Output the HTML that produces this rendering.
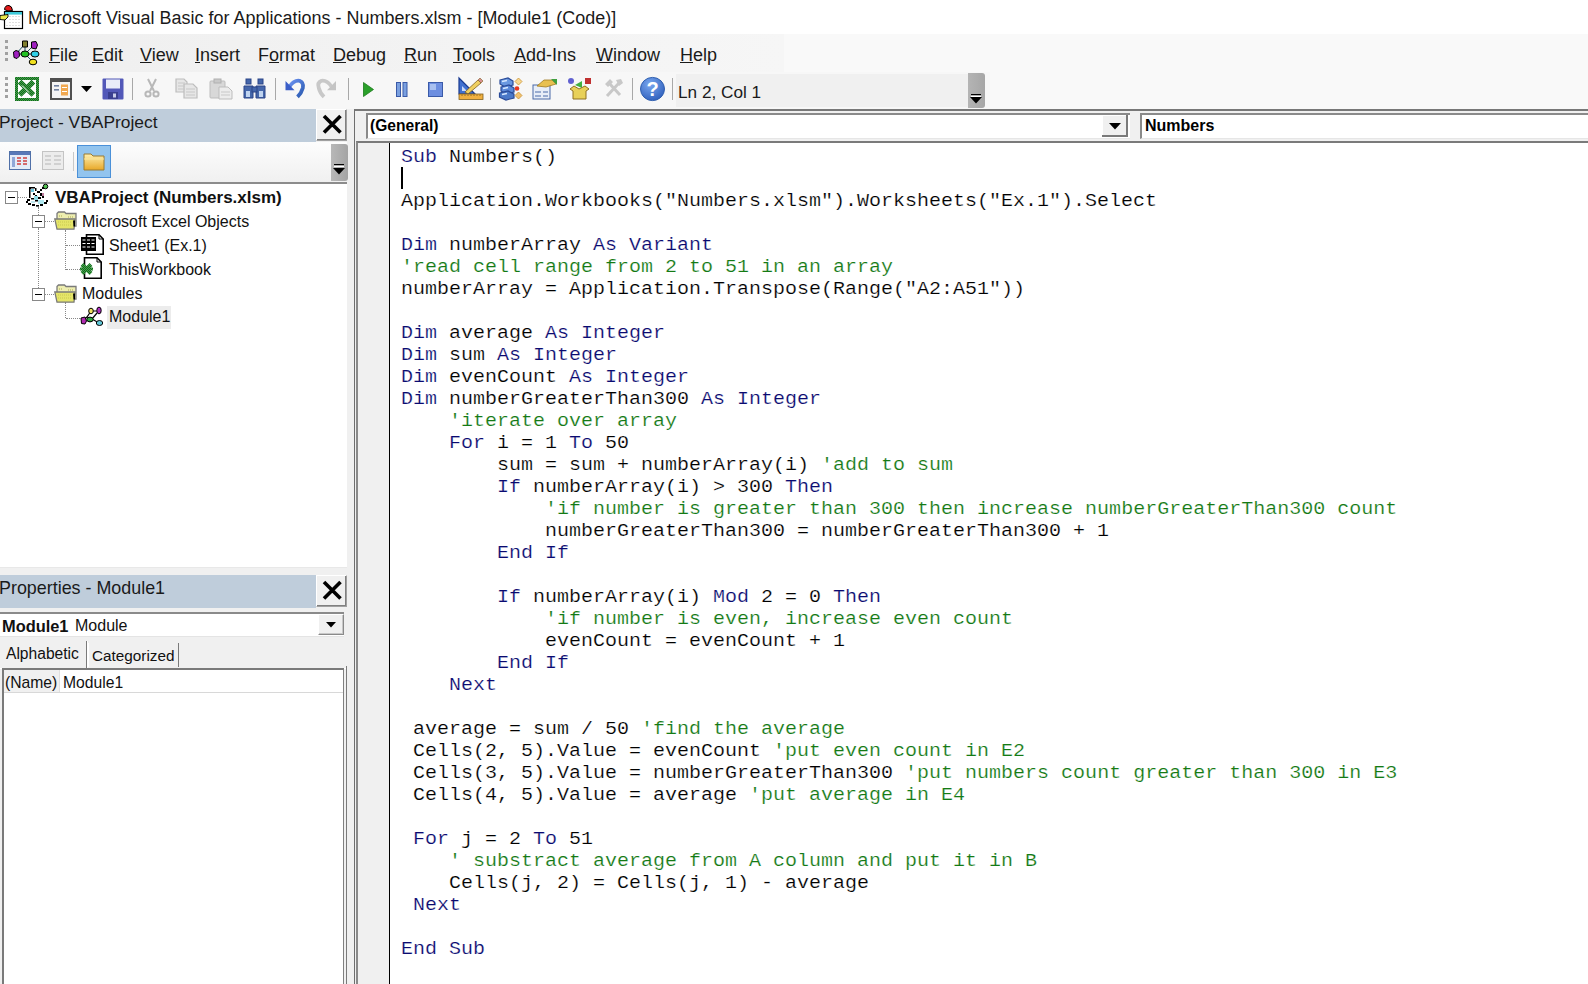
<!DOCTYPE html>
<html><head><meta charset="utf-8">
<style>
*{margin:0;padding:0;box-sizing:border-box}
html,body{width:1588px;height:984px;overflow:hidden;background:#f0f0f0;font-family:"Liberation Sans",sans-serif;color:#000;position:relative}
.a{position:absolute}
svg{position:absolute;overflow:visible}
#title{left:0;top:0;width:1588px;height:34px;background:#fff}
#title .t{left:28px;top:8px;font-size:17.95px;letter-spacing:0.02px;white-space:nowrap;color:#1a1a1a}
#dock{left:0;top:34px;width:1588px;height:75px;background:#f9f9f9}
#menu{left:0;top:34px;width:784px;height:38px;background:linear-gradient(90deg,#efefef,#f3f3f3 60%,#f6f6f6)}
#menu span{position:absolute;top:11px;font-size:18px;color:#1a1a1a;white-space:nowrap}
#menu u{text-underline-offset:1px}
#tb{left:0;top:72px;width:990px;height:37px;background:#f7f7f7}
.sep{position:absolute;width:1px;background:#a8a8a8;top:6px;height:22px}
.grip{position:absolute;width:3px;height:3px;background:#a0a0a0}
#ln{left:676px;top:2px;width:292px;height:33px;background:#f0f0f0}
#ln span{position:absolute;left:2px;top:8px;font-size:17.2px;color:#1a1a1a;white-space:nowrap}
.ptitle{left:0;width:316px;height:33px;background:#bfcddb;overflow:hidden}
.ptitle span{position:absolute;left:-1px;top:5px;line-height:1;font-size:17.4px;color:#1a1a1a;white-space:nowrap}
.xbtn{width:31px;height:32px;background:#f0f0f0;border:1px solid #a0a0a0;border-left-color:#fff;border-top-color:#fff;box-shadow:inset -1px -1px 0 #808080}
#ptb{left:0;top:142px;width:347px;height:40px;background:linear-gradient(#fdfdfd,#f0f0f0)}
#tree{left:0;top:182px;width:347px;height:386px;background:#fff;border-top:2px solid #8c8c8c}
.tr{position:absolute;font-size:16px;white-space:nowrap;color:#111}
.mb{position:absolute;width:13px;height:13px;border:1px solid #888;background:#fff}
.mb:after{content:"";position:absolute;left:2px;top:5px;width:7px;height:1px;background:#000}
.dv{position:absolute;width:1px;border-left:1px dotted #888}
.dh{position:absolute;height:1px;border-top:1px dotted #888}
#code{left:354px;top:109px;width:1234px;height:875px;background:#f0f0f0;border-left:1px solid #6e6e6e;border-top:2px solid #787878}
.combo{position:absolute;background:#fff;border-top:2px solid #8a8a8a;border-left:2px solid #8a8a8a;border-bottom:1px solid #e6e6e6}
.combo span{position:absolute;left:3px;top:0px;font-size:15.9px;font-weight:bold;white-space:nowrap}
#ed{left:1px;top:30px;width:1232px;height:845px;background:#fff;border-top:2px solid #7a7a7a;border-left:2px solid #8a8a8a}
#gut{left:0;top:0;width:32px;height:843px;background:#f0f0f0;border-right:1px solid #000}
pre{position:absolute;left:43px;top:3px;font-family:"Liberation Mono",monospace;font-size:20px;line-height:25px;color:#000;transform:scaleY(0.88);transform-origin:0 0;-webkit-text-stroke:0.2px #fff}
pre b{font-weight:normal;color:#0a0a70}
pre i{font-style:normal;color:#147a14}
</style></head><body>
<div id="title" class="a"><div class="t a">Microsoft Visual Basic for Applications - Numbers.xlsm - [Module1 (Code)]</div></div>
<div id="dock" class="a"></div>
<div id="menu" class="a">
<span style="left:49px"><u>F</u>ile</span>
<span style="left:92px"><u>E</u>dit</span>
<span style="left:140px"><u>V</u>iew</span>
<span style="left:195px"><u>I</u>nsert</span>
<span style="left:258px">F<u>o</u>rmat</span>
<span style="left:333px"><u>D</u>ebug</span>
<span style="left:404px"><u>R</u>un</span>
<span style="left:453px"><u>T</u>ools</span>
<span style="left:514px"><u>A</u>dd-Ins</span>
<span style="left:596px"><u>W</u>indow</span>
<span style="left:680px"><u>H</u>elp</span>
</div>
<div id="tb" class="a">
<div class="sep" style="left:132px"></div>
<div class="sep" style="left:275px"></div>
<div class="sep" style="left:348px"></div>
<div class="sep" style="left:490px"></div>
<div class="sep" style="left:632px"></div>
<div class="sep" style="left:672px"></div>
<div id="ln" class="a"><span>Ln 2, Col 1</span></div>
</div>
<!-- title icon -->
<svg style="left:0;top:0" width="24" height="32" viewBox="0 0 24 32">
<rect x="4.5" y="11.5" width="18" height="17" fill="#fff" stroke="#000" stroke-width="1.2"/>
<rect x="5" y="12" width="17" height="2.6" fill="#3cc8d8"/>
<g fill="#aaa"><circle cx="10" cy="16.5" r=".5"/><circle cx="13" cy="16.5" r=".5"/><circle cx="16" cy="16.5" r=".5"/><circle cx="19" cy="16.5" r=".5"/><circle cx="10" cy="19.5" r=".5"/><circle cx="13" cy="19.5" r=".5"/><circle cx="16" cy="19.5" r=".5"/><circle cx="19" cy="19.5" r=".5"/><circle cx="10" cy="22.5" r=".5"/><circle cx="13" cy="22.5" r=".5"/><circle cx="16" cy="22.5" r=".5"/><circle cx="19" cy="22.5" r=".5"/><circle cx="7" cy="25.5" r=".5"/><circle cx="10" cy="25.5" r=".5"/><circle cx="13" cy="25.5" r=".5"/><circle cx="16" cy="25.5" r=".5"/><circle cx="19" cy="25.5" r=".5"/></g>
<path d="M4.5 9.5 Q5 5 9 5.5 Q12 6 12.5 10.5 L8 11 Z" fill="#e31b1b" stroke="#000" stroke-width="1"/>
<path d="M0 15.5 L8 14.5 L8 17 L5 20 L0 19.5 Z" fill="#e8e84a" stroke="#000" stroke-width=".9"/>
</svg>
<!-- menu grip -->
<div class="grip" style="left:5px;top:40px"></div><div class="grip" style="left:5px;top:46px"></div><div class="grip" style="left:5px;top:52px"></div><div class="grip" style="left:5px;top:58px"></div>
<!-- menu vba icon -->
<svg style="left:12px;top:39px" width="28" height="28" viewBox="0 0 28 28">
<g stroke="#000" stroke-width="1"><path d="M4 15 L13 15 L22 15 M13 15 L13 5 M13 15 L22 6 M13 15 L21 23 M4 15 L12 6" fill="none" stroke="#205060"/>
<path d="M1.5 13 L4 11.5 L7 12.5 L7.5 17 L5 19.5 L2 18.5 Z" fill="#a020c0"/>
<ellipse cx="13" cy="15" rx="4" ry="3" fill="#22c022"/>
<ellipse cx="23" cy="15" rx="4" ry="3" fill="#30d0e8"/>
<path d="M10.5 2 L15.5 2 L15.5 8 L10.5 8 Z" fill="#808030"/>
<path d="M19.5 3 L24 2.5 L25.5 6 L24 10 L19.5 9 Z" fill="#a020c0"/>
<ellipse cx="21" cy="23" rx="3.8" ry="2.8" fill="#f0e020"/></g>
</svg>
<!-- toolbar grip -->
<div class="grip" style="left:5px;top:77px"></div><div class="grip" style="left:5px;top:83px"></div><div class="grip" style="left:5px;top:89px"></div><div class="grip" style="left:5px;top:95px"></div>
<!-- excel -->
<svg style="left:15px;top:77px" width="24" height="24" viewBox="0 0 24 24">
<defs><pattern id="chk" width="2" height="2" patternUnits="userSpaceOnUse"><rect width="2" height="2" fill="#0e6a1e"/><rect width="1" height="1" fill="#4aa04a"/><rect x="1" y="1" width="1" height="1" fill="#4aa04a"/></pattern></defs>
<rect x="0" y="0" width="24" height="24" fill="url(#chk)"/>
<rect x="3" y="3" width="18" height="18" fill="#fff"/>
<g stroke="url(#chk)" stroke-width="5.2" stroke-linecap="square"><path d="M6.5 6.5 L16.5 16"/><path d="M16.5 6.5 L6.5 16"/></g>
<rect x="4" y="8" width="15" height="7" fill="url(#chk)" opacity=".0"/>
<path d="M7 8.5 L14 15.5" stroke="#fff" stroke-width="1"/>
</svg>
<!-- userform -->
<svg style="left:50px;top:78px" width="22" height="22" viewBox="0 0 22 22">
<rect x="1" y="1" width="20" height="20" fill="#f4f4f4" stroke="#505050" stroke-width="2"/>
<rect x="1" y="1" width="20" height="3" fill="#505050"/>
<rect x="4" y="7" width="5" height="1.6" fill="#7080a0"/><rect x="4" y="11" width="5" height="1.6" fill="#7080a0"/>
<rect x="11" y="6.5" width="7" height="11" fill="#f0a850"/><rect x="12" y="9" width="5" height="1" fill="#fff"/><rect x="12" y="13" width="5" height="1" fill="#fff"/>
</svg>
<svg style="left:81px;top:86px" width="12" height="7" viewBox="0 0 12 7"><path d="M0 0 L11 0 L5.5 6 Z" fill="#000"/></svg>
<!-- save -->
<svg style="left:102px;top:78px" width="22" height="22" viewBox="0 0 22 22">
<rect x="0.5" y="0.5" width="21" height="21" rx="1" fill="#5258b8"/>
<rect x="4" y="1.5" width="14" height="9" fill="#e8ecf8"/>
<rect x="6" y="14" width="10" height="7" fill="#3a3f90"/><rect x="11" y="15.5" width="3" height="4" fill="#c8cce8"/>
</svg>
<!-- cut -->
<svg style="left:144px;top:78px" width="16" height="20" viewBox="0 0 16 20">
<g fill="none" stroke="#b8b8b8" stroke-width="2"><path d="M4 1 L10 13 M12 1 L6 13"/><circle cx="4" cy="16" r="2.6"/><circle cx="12" cy="16" r="2.6"/></g>
</svg>
<!-- copy -->
<svg style="left:175px;top:78px" width="23" height="21" viewBox="0 0 23 21">
<g fill="#e6e6e6" stroke="#bdbdbd" stroke-width="1.2"><path d="M1 1 L9 1 L12 4 L12 14 L1 14 Z"/><path d="M9 6 L18 6 L22 10 L22 20 L9 20 Z"/></g>
<g stroke="#c8c8c8" stroke-width="1"><path d="M3 5 H10 M3 8 H10 M3 11 H10 M11 11 H20 M11 14 H20 M11 17 H20"/></g>
</svg>
<!-- paste -->
<svg style="left:209px;top:78px" width="24" height="22" viewBox="0 0 24 22">
<rect x="1" y="3" width="15" height="17" rx="1" fill="#d8d8d8" stroke="#bdbdbd"/>
<rect x="5" y="1" width="7" height="4" fill="#c8c8c8" stroke="#b0b0b0"/>
<path d="M10 9 L19 9 L23 13 L23 21 L10 21 Z" fill="#ececec" stroke="#bdbdbd"/>
<path d="M12 14 H21 M12 17 H21" stroke="#c8c8c8"/>
</svg>
<!-- binoculars -->
<svg style="left:243px;top:78px" width="23" height="21" viewBox="0 0 23 21">
<g fill="#4466aa" stroke="#2a4488" stroke-width="1"><rect x="3" y="1" width="5" height="5"/><rect x="15" y="1" width="5" height="5"/>
<path d="M1 8 L10 8 L10 20 L1 20 Z"/><path d="M13 8 L22 8 L22 20 L13 20 Z"/><rect x="9" y="9" width="5" height="5"/></g>
<rect x="3" y="13" width="4" height="6" fill="#c0d4f0"/><rect x="16" y="13" width="4" height="6" fill="#c0d4f0"/>
</svg>
<!-- undo -->
<svg style="left:285px;top:79px" width="20" height="19" viewBox="0 0 20 19">
<defs><linearGradient id="ug" x1="0" y1="0" x2="1" y2="1"><stop offset="0" stop-color="#6a90f0"/><stop offset="1" stop-color="#2a5ab0"/></linearGradient></defs>
<path d="M4.5 7.5 Q9 1 14.5 1.8 Q19 3.5 17.8 9 Q16.5 14 12.5 17.8" fill="none" stroke="url(#ug)" stroke-width="3.8"/>
<path d="M0.5 2 L0.5 11.2 L9.5 11.2 Z" fill="#3a5ec8"/>
</svg>
<!-- redo -->
<svg style="left:318px;top:79px" width="20" height="19" viewBox="0 0 20 19">
<path d="M13.5 7.5 Q9 1 3.5 1.8 Q-1 3.5 0.8 9 Q2 14 6 17.8" fill="none" stroke="#c8c8c8" stroke-width="3.8"/>
<path d="M18 2 L18 11.2 L9 11.2 Z" fill="#c4c4c4"/>
</svg>
<!-- run -->
<svg style="left:363px;top:82px" width="11" height="15" viewBox="0 0 11 15"><path d="M0.5 0.5 L10.5 7.5 L0.5 14.5 Z" fill="#2aa02a" stroke="#1a7a1a" stroke-width=".8"/></svg>
<!-- pause -->
<svg style="left:396px;top:82px" width="12" height="15" viewBox="0 0 12 15"><rect x="0.5" y="0.5" width="4" height="14" fill="#7aa0e0" stroke="#3a5aa8"/><rect x="7" y="0.5" width="4" height="14" fill="#7aa0e0" stroke="#3a5aa8"/></svg>
<!-- stop -->
<svg style="left:428px;top:82px" width="15" height="15" viewBox="0 0 15 15"><rect x="0.5" y="0.5" width="14" height="14" fill="#6c8ee0" stroke="#3a5aa8"/><rect x="2" y="2" width="6" height="6" fill="#a8c0f0"/></svg>
<!-- design -->
<svg style="left:458px;top:77px" width="26" height="23" viewBox="0 0 26 23">
<path d="M1 1 L1 17 L17 17 Z" fill="#4070d0" stroke="#1a3a90" stroke-width="1.2"/><path d="M4 9 L4 14 L9 14 Z" fill="#c8d8f8"/>
<path d="M7 15 L20 3 L23 6 L10 17 Z" fill="#f0d060" stroke="#806020" stroke-width=".8"/>
<path d="M20 3 L22 1 L25 4 L23 6 Z" fill="#d89090" stroke="#806020" stroke-width=".6"/>
<rect x="1" y="17" width="24" height="5.5" fill="#f0b040" stroke="#806020" stroke-width=".8"/>
<path d="M4 17.5 V19 M7 17.5 V19 M10 17.5 V19 M13 17.5 V19 M16 17.5 V19 M19 17.5 V19 M22 17.5 V19" stroke="#806020" stroke-width=".8"/>
</svg>
<!-- project explorer -->
<svg style="left:499px;top:77px" width="25" height="24" viewBox="0 0 25 24">
<g stroke="#2a4a98" stroke-width="1.2">
<path d="M1 3 L9 1 L14 4 L14 8 L6 10 L1 7 Z" fill="#6a98e0"/>
<path d="M2 10 L10 8 L15 11 L15 15 L7 17 L2 14 Z" fill="#5a88d8"/>
<path d="M0.5 16 L9 14 L15 17 L15 21 L7 23 L0.5 20 Z" fill="#4a78c8"/>
</g>
<path d="M3 4.5 L8 3.5 M4 11.5 L9 10.5 M3 17.5 L8 16.5" stroke="#d8e8ff" stroke-width="1.3"/>
<path d="M19.5 1 L23 4.5 L19.5 8 L16 4.5 Z" fill="#f8d890" stroke="#c89030" stroke-width=".8"/>
<circle cx="18" cy="11.5" r="2.3" fill="#e83820"/>
<path d="M19.5 15 L23 18.5 L19.5 22 L16 18.5 Z" fill="#f0c070" stroke="#c89030" stroke-width=".8"/>
</svg>
<!-- properties -->
<svg style="left:532px;top:78px" width="26" height="22" viewBox="0 0 26 22">
<rect x="1" y="7" width="17" height="14" fill="#e8eef8" stroke="#4a6aa8"/>
<path d="M3 14 H9 M11 14 H16 M3 18 H9 M11 18 H16" stroke="#4a6aa8" stroke-width="1.2"/>
<path d="M5 8 L12 2 L20 2 L24 6 L14 9 Z" fill="#e8c050" stroke="#a07a20" stroke-width=".8"/>
<path d="M19 1 L25 1 L25 7 Z" fill="#40a040"/>
</svg>
<!-- object browser -->
<svg style="left:567px;top:77px" width="25" height="24" viewBox="0 0 25 24">
<circle cx="4" cy="4" r="3" fill="#6060d0"/><rect x="18" y="1" width="6" height="6" fill="#c03030"/><path d="M8 8 L15 4 L15 11 Z" fill="#40b040"/>
<path d="M3 12 L7 9 L12 12 L18 9 L22 12 L19 14 L19 22 L6 22 L6 14 Z" fill="#e8d058" stroke="#907020"/>
</svg>
<!-- toolbox -->
<svg style="left:604px;top:78px" width="20" height="21" viewBox="0 0 20 21">
<g stroke="#c8c8c8" stroke-width="3" fill="none"><path d="M3 18 L15 5"/><path d="M5 5 L16 17"/></g>
<path d="M1 6 L6 1 L9 4 L4 9 Z M12 2 L17 1 L19 5 L15 8 Z" fill="#c8c8c8"/>
</svg>
<!-- help -->
<svg style="left:640px;top:77px" width="25" height="24" viewBox="0 0 25 24">
<defs><radialGradient id="hg" cx=".4" cy=".3" r=".8"><stop offset="0" stop-color="#7aa8f0"/><stop offset="1" stop-color="#2a5ab8"/></radialGradient></defs>
<ellipse cx="12.5" cy="12" rx="12" ry="11.6" fill="url(#hg)" stroke="#3060b0"/>
<text x="12.5" y="19" font-family="Liberation Sans" font-weight="bold" font-size="20" fill="#fff" text-anchor="middle">?</text>
</svg>
<!-- ln grip -->
<div class="a" style="left:968px;top:73px;width:17px;height:35px;background:linear-gradient(90deg,#b4b4b4,#a6a6a6);border-radius:0 3px 3px 0"></div>
<div class="a" style="left:971px;top:94px;width:10px;height:1px;background:#000"></div>
<div class="a" style="left:971px;top:96px;width:10px;height:1px;background:#fff"></div>
<svg style="left:970px;top:97px" width="12" height="7" viewBox="0 0 12 7"><path d="M0 0 L12 0 L6 6.5 Z" fill="#000"/></svg>

<!-- project pane -->
<div class="a ptitle" style="top:109px"><span>Project - VBAProject</span></div>
<div class="a xbtn" style="left:316px;top:109px"></div>
<div id="ptb" class="a"></div>
<div id="tree" class="a">
<div class="tr" style="left:55px;top:4px;font-weight:bold;font-size:17px">VBAProject (Numbers.xlsm)</div>
<div class="tr" style="left:82px;top:29px">Microsoft Excel Objects</div>
<div class="tr" style="left:109px;top:53px">Sheet1 (Ex.1)</div>
<div class="tr" style="left:109px;top:77px">ThisWorkbook</div>
<div class="tr" style="left:82px;top:101px">Modules</div>
<div class="a" style="left:107px;top:122px;width:64px;height:23px;background:#ececec"></div>
<div class="tr" style="left:109px;top:124px">Module1</div>
</div>
<!-- properties pane -->
<div class="a ptitle" style="top:575px"><span style="font-size:17.9px;top:5px">Properties - Module1</span></div>
<div class="a xbtn" style="left:316px;top:575px"></div>
<!-- close X glyphs -->
<svg style="left:316px;top:109px" width="31" height="32" viewBox="0 0 31 32"><path d="M8 7 L24.5 23.5 M24.5 7 L8 23.5" stroke="#000" stroke-width="3.6"/></svg>
<svg style="left:316px;top:575px" width="31" height="32" viewBox="0 0 31 32"><path d="M8 7 L24.5 23.5 M24.5 7 L8 23.5" stroke="#000" stroke-width="3.6"/></svg>
<!-- project toolbar icons -->
<svg style="left:9px;top:151px" width="22" height="19" viewBox="0 0 22 19">
<rect x="0.5" y="0.5" width="21" height="18" fill="#e4ecf8" stroke="#5070a8"/>
<rect x="1" y="1" width="20" height="3" fill="#5878b8"/>
<rect x="3" y="6" width="3" height="10" fill="#90a8d8"/>
<path d="M8 7 H12 M14 7 H18 M8 10 H12 M14 10 H18 M8 13 H12 M14 13 H18" stroke="#d04040" stroke-width="1.4"/>
</svg>
<svg style="left:42px;top:151px" width="22" height="19" viewBox="0 0 22 19">
<rect x="0.5" y="0.5" width="21" height="18" fill="#ececec" stroke="#c4c4c4"/>
<path d="M3 5 H9 M12 5 H19 M3 9 H9 M12 9 H19 M3 13 H9 M12 13 H19" stroke="#c8c8c8" stroke-width="1.6"/>
</svg>
<div class="a" style="left:73px;top:152px;width:1px;height:19px;background:#c8c8c8"></div>
<div class="a" style="left:77px;top:145px;width:34px;height:33px;background:#92c4ee;border:1px solid #4a90d8"></div>
<svg style="left:83px;top:151px" width="22" height="20" viewBox="0 0 22 20">
<defs><linearGradient id="fg" x1="0" y1="0" x2="0" y2="1"><stop offset="0" stop-color="#fff0b0"/><stop offset="1" stop-color="#e8a828"/></linearGradient></defs>
<path d="M1 3 L8 3 L10 5 L21 5 L21 19 L1 19 Z" fill="url(#fg)" stroke="#9a7a30"/>
<path d="M1 8 H21" stroke="#f8e8a0"/>
</svg>
<div class="a" style="left:331px;top:144px;width:17px;height:37px;background:linear-gradient(90deg,#b8b8b8,#a4a4a4);border-radius:0 3px 3px 0"></div>
<div class="a" style="left:334px;top:164px;width:10px;height:1px;background:#000"></div>
<div class="a" style="left:334px;top:166px;width:10px;height:1px;background:#fff"></div>
<svg style="left:333px;top:168px" width="12" height="7" viewBox="0 0 12 7"><path d="M0 0 L12 0 L6 6.5 Z" fill="#000"/></svg>
<!-- tree lines -->
<div class="mb" style="left:5px;top:191px"></div>
<div class="mb" style="left:32px;top:215px"></div>
<div class="mb" style="left:32px;top:288px"></div>
<div class="dh" style="left:18px;top:197px;width:9px"></div>
<div class="dv" style="left:38px;top:207px;height:8px"></div>
<div class="dv" style="left:38px;top:228px;height:60px"></div>
<div class="dh" style="left:45px;top:221px;width:9px"></div>
<div class="dh" style="left:45px;top:294px;width:9px"></div>
<div class="dv" style="left:65px;top:230px;height:40px"></div>
<div class="dh" style="left:66px;top:245px;width:14px"></div>
<div class="dh" style="left:66px;top:269px;width:14px"></div>
<div class="dv" style="left:65px;top:302px;height:16px"></div>
<div class="dh" style="left:66px;top:318px;width:14px"></div>
<!-- project icon -->
<svg style="left:26px;top:184px" width="24" height="24" viewBox="0 0 24 24">
<g fill="#000">
<rect x="3" y="3" width="2" height="2"/><rect x="5" y="3" width="4" height="1.5"/><rect x="3" y="5" width="1.5" height="9"/>
<rect x="9" y="4" width="1.5" height="3"/><rect x="11" y="7" width="3" height="2"/><rect x="14" y="5" width="2" height="2"/>
<rect x="16" y="3" width="2" height="2"/><rect x="7" y="9" width="2" height="2"/><rect x="9" y="11" width="2" height="2"/>
<rect x="14" y="9" width="2" height="3"/><rect x="16" y="12" width="2" height="2"/><rect x="12" y="13" width="3" height="2"/>
<rect x="1" y="15" width="3" height="2"/><rect x="0" y="17" width="2" height="2"/><rect x="2" y="19" width="3" height="2"/>
<rect x="6" y="20" width="3" height="2"/><rect x="10" y="21" width="3" height="1.6"/><rect x="14" y="20" width="3" height="2"/>
<rect x="18" y="18" width="3" height="2"/><rect x="20" y="16" width="2" height="2"/><rect x="5" y="14" width="3" height="1.5"/>
<rect x="9" y="16" width="3" height="1.5"/><rect x="15" y="16" width="3" height="1.5"/>
</g>
<rect x="5" y="5" width="3" height="3" fill="#70c8e0"/><rect x="8" y="12" width="4" height="4" fill="#90dce8"/><rect x="12" y="16" width="6" height="4" fill="#b0e8f0"/>
<rect x="5" y="17" width="4" height="2" fill="#c0e8f0"/>
<rect x="16" y="9" width="2" height="3" fill="#c080a0"/>
<circle cx="19.5" cy="2.5" r="2.3" fill="#50c050" stroke="#000" stroke-width="1"/>
</svg>
<!-- folders -->
<svg style="left:54px;top:211px" width="24" height="19" viewBox="0 0 24 19">
<path d="M3 2.5 L4.5 1 L10.5 1 L12 2.5 L22 2.5 L22 15 L3 15 Z" fill="#eeeeb0" stroke="#7a7a7a" stroke-width="1.3"/>
<path d="M5 5 L9 5 M14 6 L19 6" stroke="#a8a850" stroke-width="1" stroke-dasharray="1 1"/>
<path d="M0.8 8 L21 8 L20 18.2 L3 18.2 Z" fill="#e4e468" stroke="#7a7a7a" stroke-width="1.3"/>
<path d="M4 11 H18 M4 14 H18" stroke="#c8c850" stroke-width="1" stroke-dasharray="1 1"/>
<path d="M19 9.5 L21 9.5 L21 15.5 L19.5 15.5 Z" fill="#000"/>
</svg>
<svg style="left:54px;top:284px" width="24" height="19" viewBox="0 0 24 19">
<path d="M3 2.5 L4.5 1 L10.5 1 L12 2.5 L22 2.5 L22 15 L3 15 Z" fill="#eeeeb0" stroke="#7a7a7a" stroke-width="1.3"/>
<path d="M5 5 L9 5 M14 6 L19 6" stroke="#a8a850" stroke-width="1" stroke-dasharray="1 1"/>
<path d="M0.8 8 L21 8 L20 18.2 L3 18.2 Z" fill="#e4e468" stroke="#7a7a7a" stroke-width="1.3"/>
<path d="M4 11 H18 M4 14 H18" stroke="#c8c850" stroke-width="1" stroke-dasharray="1 1"/>
<path d="M19 9.5 L21 9.5 L21 15.5 L19.5 15.5 Z" fill="#000"/>
</svg>
<!-- sheet icon -->
<svg style="left:81px;top:234px" width="24" height="22" viewBox="0 0 24 22">
<path d="M5.5 0.8 L18 0.8 L22.2 5 L22.2 20.2 L5.5 20.2 Z" fill="#fff" stroke="#000" stroke-width="1.6"/>
<path d="M18 0.8 L18 5 L22.2 5" fill="none" stroke="#000" stroke-width="1"/>
<rect x="0" y="3" width="15" height="14" fill="#000"/>
<path d="M1.5 6 H4.5 M6 6 H9 M10.5 6 H13.5 M1.5 9.5 H4.5 M6 9.5 H9 M10.5 9.5 H13.5 M1.5 13 H4.5 M6 13 H9 M10.5 13 H13.5" stroke="#fff" stroke-width="1.2"/>
</svg>
<!-- workbook icon -->
<svg style="left:80px;top:257px" width="24" height="23" viewBox="0 0 24 23">
<path d="M4.5 0.8 L17 0.8 L21.2 5 L21.2 21.2 L4.5 21.2 Z" fill="#fff" stroke="#000" stroke-width="1.6"/>
<path d="M17 0.8 L17 5 L21.2 5" fill="none" stroke="#000" stroke-width="1"/>
<g stroke="url(#chk)" stroke-width="4"><path d="M2 7.5 L11 16.5 M11 7.5 L2 16.5"/></g>
<rect x="0" y="10.5" width="13" height="3" fill="url(#chk)"/>
</svg>
<!-- module icon -->
<svg style="left:80px;top:306px" width="24" height="21" viewBox="0 0 24 21">
<g stroke="#000" stroke-width="1.2" fill="none"><path d="M3 14 L7 11 L11 5 L19 5 M7 11 L12 13 L19 17 M12 13 L17 7"/></g>
<g stroke="#000" stroke-width="1">
<path d="M1 12 L5 11 L6.5 15 L5 18 L1.5 17.5 Z" fill="#b02ab0"/>
<ellipse cx="10" cy="13.5" rx="3.2" ry="2.4" fill="#30a840"/>
<ellipse cx="11" cy="5" rx="2.3" ry="2.8" fill="#f0e060"/>
<ellipse cx="19" cy="4.5" rx="2.2" ry="3.4" fill="#b030c0"/>
<ellipse cx="19.5" cy="17" rx="3.2" ry="2.5" fill="#60c8d8"/>
</g>
</svg>
<!-- properties combo -->
<div class="a" style="left:0;top:612px;width:344px;height:25px;background:#fff;border-top:2px solid #8a8a8a;border-bottom:1px solid #e4e4e4"></div>
<div class="a" style="left:2px;top:617px;font-size:16.4px;font-weight:bold;white-space:nowrap;color:#111">Module1</div><div class="a" style="left:75px;top:617px;font-size:16px;white-space:nowrap;color:#111">Module</div>
<div class="a" style="left:318px;top:614px;width:26px;height:21px;background:#f0f0f0;border:1px solid #fff;border-right-color:#8a8a8a;border-bottom-color:#8a8a8a;box-shadow:inset -1px -1px 0 #c8c8c8"></div>
<svg style="left:326px;top:622px" width="10" height="6" viewBox="0 0 10 6"><path d="M0 0 L10 0 L5 5.5 Z" fill="#000"/></svg>
<!-- tabs -->
<div class="a" style="left:0;top:641px;width:87px;height:27px;background:#f0f0f0;border-right:1px solid #7a7a7a;box-shadow:1px 0 0 #fff"></div>
<div class="a" style="left:6px;top:645px;font-size:15.6px;color:#111;white-space:nowrap">Alphabetic</div>
<div class="a" style="left:88px;top:643px;width:91px;height:24px;background:#f0f0f0;border-left:1px solid #fff;border-right:1px solid #7a7a7a"></div>
<div class="a" style="left:92px;top:647px;font-size:15.3px;color:#111;white-space:nowrap">Categorized</div>
<!-- property grid -->
<div class="a" style="left:0;top:668px;width:347px;height:316px;background:#f0f0f0;border-top:1px solid #fff"></div>
<div class="a" style="left:2px;top:668px;width:342px;height:316px;background:#fff;border-top:2px solid #7a7a7a;border-left:2px solid #7a7a7a;border-right:1px solid #808080"></div>
<div class="a" style="left:346px;top:666px;width:1px;height:318px;background:#7a7a7a"></div>
<div class="a" style="left:4px;top:670px;width:56px;height:22px;background:#f0f0f0;border-right:1px solid #e0e0e0"></div>
<div class="a" style="left:4px;top:692px;width:339px;height:1px;background:#d8d8d8"></div>
<div class="a" style="left:5px;top:674px;font-size:15.7px;color:#111;white-space:nowrap">(Name)</div>
<div class="a" style="left:63px;top:674px;font-size:15.7px;color:#111;white-space:nowrap">Module1</div>
<!-- gap bg line bottom of tree -->
<div class="a" style="left:0;top:567px;width:347px;height:1px;background:#e8e8e8"></div>

<!-- code window -->
<div id="code" class="a">
<div class="combo" style="left:11px;top:2px;width:764px;height:26px"><span style="top:1.5px;left:2px;font-size:15.6px">(General)</span><div class="a" style="left:734px;top:0;width:26px;height:22px;background:#f0f0f0;border-right:2px solid #7a7a7a;border-bottom:2px solid #7a7a7a;box-shadow:inset 1px 1px 0 #fff"></div><svg style="left:741px;top:8px" width="12" height="7" viewBox="0 0 12 7"><path d="M0 0 L12 0 L6 6.5 Z" fill="#000"/></svg></div>
<div class="combo" style="left:785px;top:2px;width:460px;height:26px"><span style="top:1.5px;font-size:16px">Numbers</span></div>
<div id="ed" class="a">
<div id="gut" class="a"></div>
<pre><b>Sub</b> Numbers()

Application.Workbooks("Numbers.xlsm").Worksheets("Ex.1").Select

<b>Dim</b> numberArray <b>As</b> <b>Variant</b>
<i>'read cell range from 2 to 51 in an array</i>
numberArray = Application.Transpose(Range("A2:A51"))

<b>Dim</b> average <b>As</b> <b>Integer</b>
<b>Dim</b> sum <b>As</b> <b>Integer</b>
<b>Dim</b> evenCount <b>As</b> <b>Integer</b>
<b>Dim</b> numberGreaterThan300 <b>As</b> <b>Integer</b>
    <i>'iterate over array</i>
    <b>For</b> i = 1 <b>To</b> 50
        sum = sum + numberArray(i) <i>'add to sum</i>
        <b>If</b> numberArray(i) &gt; 300 <b>Then</b>
            <i>'if number is greater than 300 then increase numberGreaterThan300 count</i>
            numberGreaterThan300 = numberGreaterThan300 + 1
        <b>End</b> <b>If</b>

        <b>If</b> numberArray(i) <b>Mod</b> 2 = 0 <b>Then</b>
            <i>'if number is even, increase even count</i>
            evenCount = evenCount + 1
        <b>End</b> <b>If</b>
    <b>Next</b>

 average = sum / 50 <i>'find the average</i>
 Cells(2, 5).Value = evenCount <i>'put even count in E2</i>
 Cells(3, 5).Value = numberGreaterThan300 <i>'put numbers count greater than 300 in E3</i>
 Cells(4, 5).Value = average <i>'put average in E4</i>

 <b>For</b> j = 2 <b>To</b> 51
    <i>' substract average from A column and put it in B</i>
    Cells(j, 2) = Cells(j, 1) - average
 <b>Next</b>

<b>End</b> <b>Sub</b></pre>
<div class="a" style="left:43px;top:24px;width:2px;height:22px;background:#000"></div>
</div>
</div>
</body></html>
